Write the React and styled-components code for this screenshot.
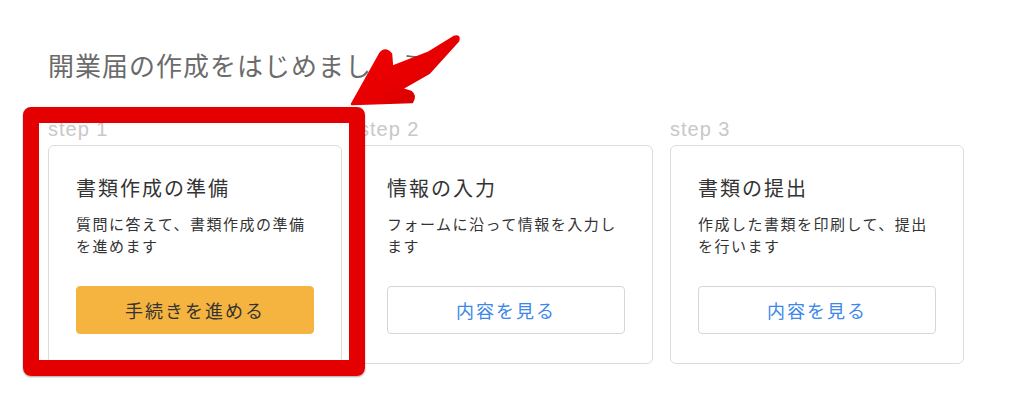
import React from 'react';
import styled, { createGlobalStyle } from 'styled-components';

const GlobalStyle = createGlobalStyle`
	body {
		margin: 0;
		background: #FFFFFF;
		font-family: 'Noto Sans CJK JP', 'Noto Sans', sans-serif;
	}
`;

const steps = [
	{
		label: 'step 1',
		title: '書類作成の準備',
		text: '質問に答えて、書類作成の準備を進めます',
		button: '手続きを進める',
		primary: true,
	},
	{
		label: 'step 2',
		title: '情報の入力',
		text: 'フォームに沿って情報を入力します',
		button: '内容を見る',
	},
	{
		label: 'step 3',
		title: '書類の提出',
		text: '作成した書類を印刷して、提出を行います',
		button: '内容を見る',
	},
];

export default function App () {
	return (
		<>
			<GlobalStyle />
			<Page>
				<Heading>開業届の作成をはじめましょう</Heading>
				<StepRow>
					{steps.map(step => (
						<Step key={step.label}>
							<StepLabel>{step.label}</StepLabel>
							<Card>
								<CardTitle>{step.title}</CardTitle>
								<CardText>{step.text}</CardText>
								<ActionButton $primary={step.primary}>{step.button}</ActionButton>
							</Card>
						</Step>
					))}
				</StepRow>
				<Highlight />
				<Arrow width="130" height="80" viewBox="340 30 130 80">
					<defs>
						<linearGradient id="arrowFill" x1="0" y1="0" x2="1" y2="1">
							<stop offset="0" stopColor="#f40000" />
							<stop offset="0.6" stopColor="#e50000" />
							<stop offset="1" stopColor="#c40000" />
						</linearGradient>
					</defs>
					{/* big pointer, tip down-left toward the step 1 box */}
					<path
						d="M352,104 L380,54 Q385,47 391,54 L392,67 L428,53 L454,37 Q460,35 458,41 L429,73 L401,89 L411,92 Q416,96 412,102 Z"
						fill="url(#arrowFill)"
						stroke="url(#arrowFill)"
						strokeWidth="2.5"
						strokeLinejoin="round"
					/>
				</Arrow>
			</Page>
		</>
	);
}

const Page = styled.div`
	position: relative;
	width: 1024px;
	height: 401px;
	box-sizing: border-box;
	padding: 47px 0 0 48px;
	overflow: hidden;
`;

const Heading = styled.h1`
	margin: 0 0 35px;
	font-size: 26px;
	line-height: 36px;
	font-weight: 400;
	letter-spacing: 1px;
	color: #6b6b6b;
`;

const StepRow = styled.div`
	display: flex;
	gap: 17px;
`;

const Step = styled.div`
	width: 294px;
	display: flex;
	flex-direction: column;
`;

const StepLabel = styled.div`
	font-family: 'Liberation Sans', Arial, sans-serif;
	font-size: 20px;
	line-height: 22px;
	letter-spacing: 1px;
	color: #c8c8c8;
	margin-bottom: 5px;
`;

const Card = styled.div`
	border: 1px solid #dcdcdc;
	border-radius: 6px;
	padding: 28px 27px 29px;
	background: #FFFFFF;
`;

const CardTitle = styled.div`
	font-size: 20px;
	line-height: 28px;
	letter-spacing: 2px;
	color: #333333;
	margin-bottom: 11px;
`;

const CardText = styled.div`
	font-size: 15px;
	line-height: 22px;
	letter-spacing: 1.5px;
	color: #333333;
	height: 44px;
	margin-bottom: 29px;
`;

const ActionButton = styled.div`
	height: 48px;
	box-sizing: border-box;
	display: flex;
	align-items: center;
	justify-content: center;
	border-radius: 4px;
	font-size: 18px;
	letter-spacing: 2px;
	background: ${props => props.$primary ? '#f4b43f' : '#FFFFFF'};
	border: 1px solid ${props => props.$primary ? '#f4b43f' : '#d6d6d6'};
	color: ${props => props.$primary ? '#333333' : '#3d87e8'};
`;

const Highlight = styled.div`
	position: absolute;
	left: 23px;
	top: 107px;
	width: 342px;
	height: 269px;
	box-sizing: border-box;
	border: 16px solid #e40000;
	border-radius: 8px;
	box-shadow: 0 1px 2px rgba(0, 0, 0, 0.35);
`;

const Arrow = styled.svg`
	position: absolute;
	left: 340px;
	top: 30px;
`;
